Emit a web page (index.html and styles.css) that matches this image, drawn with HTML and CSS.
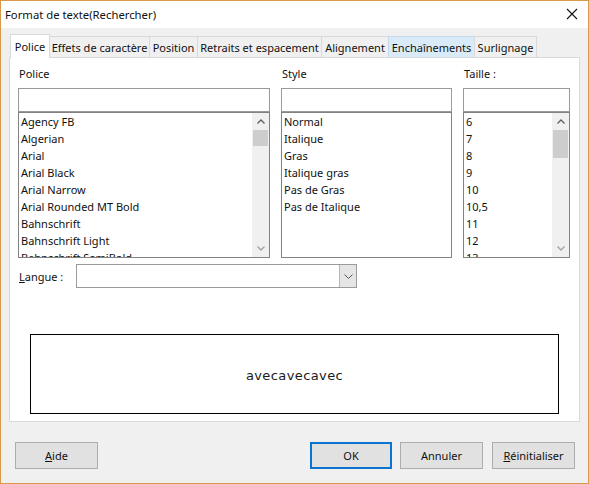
FILE: index.html
```html
<!DOCTYPE html>
<html lang="fr">
<head>
<meta charset="utf-8">
<title>Format de texte(Rechercher)</title>
<link rel="stylesheet" href="styles.css">
</head>
<body>
<div class="window">
  <div class="titlebar">
    <span class="title">Format de texte(Rechercher)</span>
    <svg class="close" width="12" height="12" viewBox="0 0 12 12"><path d="M1 1 L11 11 M11 1 L1 11" stroke="#111" stroke-width="1.1" fill="none"/></svg>
  </div>
  <div class="tabs">
    <div class="tab selected t-police">Police</div>
    <div class="tab t-effets">Effets de caractère</div>
    <div class="tab t-position">Position</div>
    <div class="tab t-retraits">Retraits et espacement</div>
    <div class="tab t-align">Alignement</div>
    <div class="tab hover t-ench">Enchaînements</div>
    <div class="tab t-surl">Surlignage</div>
  </div>
  <div class="panel">
    <div class="cols">
      <div class="col">
        <div class="label">Police</div>
        <div class="input"></div>
        <div class="list">
          <div class="items">
            <div class="item">Agency FB</div>
            <div class="item">Algerian</div>
            <div class="item">Arial</div>
            <div class="item">Arial Black</div>
            <div class="item">Arial Narrow</div>
            <div class="item">Arial Rounded MT Bold</div>
            <div class="item">Bahnschrift</div>
            <div class="item">Bahnschrift Light</div>
            <div class="item">Bahnschrift SemiBold</div>
          </div>
          <div class="scrollbar">
            <div class="sb-btn"><svg width="8" height="5" viewBox="0 0 8 5"><path d="M0.5 4.5 L4 1 L7.5 4.5" stroke="#606060" stroke-width="1.3" fill="none"/></svg></div>
            <div class="thumb thumb-small"></div>
            <div class="track"></div>
            <div class="sb-btn"><svg width="8" height="5" viewBox="0 0 8 5"><path d="M0.5 0.5 L4 4 L7.5 0.5" stroke="#a0a0a0" stroke-width="1.3" fill="none"/></svg></div>
          </div>
        </div>
      </div>
      <div class="col">
        <div class="label">Style</div>
        <div class="input"></div>
        <div class="list">
          <div class="items">
            <div class="item">Normal</div>
            <div class="item">Italique</div>
            <div class="item">Gras</div>
            <div class="item">Italique gras</div>
            <div class="item">Pas de Gras</div>
            <div class="item">Pas de Italique</div>
          </div>
        </div>
      </div>
      <div class="col">
        <div class="label">Taille :</div>
        <div class="input"></div>
        <div class="list">
          <div class="items">
            <div class="item">6</div>
            <div class="item">7</div>
            <div class="item">8</div>
            <div class="item">9</div>
            <div class="item">10</div>
            <div class="item">10,5</div>
            <div class="item">11</div>
            <div class="item">12</div>
            <div class="item">13</div>
          </div>
          <div class="scrollbar">
            <div class="sb-btn"><svg width="8" height="5" viewBox="0 0 8 5"><path d="M0.5 4.5 L4 1 L7.5 4.5" stroke="#606060" stroke-width="1.3" fill="none"/></svg></div>
            <div class="thumb thumb-large"></div>
            <div class="track"></div>
            <div class="sb-btn"><svg width="8" height="5" viewBox="0 0 8 5"><path d="M0.5 0.5 L4 4 L7.5 0.5" stroke="#a0a0a0" stroke-width="1.3" fill="none"/></svg></div>
          </div>
        </div>
      </div>
    </div>
    <div class="langue-row">
      <div class="langue-label"><u>L</u>angue :</div>
      <div class="combo">
        <div class="combo-field"></div>
        <div class="combo-btn"><svg width="9" height="5" viewBox="0 0 9 5"><path d="M0.5 0.5 L4.5 4.5 L8.5 0.5" stroke="#555" stroke-width="1" fill="none"/></svg></div>
      </div>
    </div>
    <div class="preview"><span>avecavecavec</span></div>
  </div>
  <div class="buttons">
    <div class="btn"><u>A</u>ide</div>
    <div class="spacer"></div>
    <div class="btn default">OK</div>
    <div class="btn">Annuler</div>
    <div class="btn"><u>R</u>éinitialiser</div>
  </div>
</div>
</body>
</html>
```
FILE: styles.css
```css
* { box-sizing: border-box; }
html, body { margin: 0; padding: 0; background: #f0f0f0; }
body {
  font-family: "Noto Sans", "Open Sans", sans-serif;
  font-size: 11px;
  color: #111;
}
.window {
  width: 589px;
  height: 484px;
  background: #f0f0f0;
  border: 1px solid #d8994a;
  display: flex;
  flex-direction: column;
}
.titlebar {
  height: 27px;
  background: #fff;
  display: flex;
  align-items: center;
  padding: 0 10px 1px 4px;
}
.title { flex: 1; font-size: 11.3px; }
.close { display: block; }

.tabs {
  margin-top: 6px;
  height: 23px;
  padding-left: 9px;
  display: flex;
  align-items: flex-end;
  position: relative;
  z-index: 2;
}
.tab {
  height: 21px;
  border: 1px solid #d9d9d9;
  border-bottom: none;
  background: #f0f0f0;
  margin-left: -1px;
  display: flex;
  align-items: center;
  justify-content: center;
  white-space: nowrap;
  padding-top: 1px;
}
.tab.selected {
  height: 24px;
  margin-bottom: -1px;
  background: #fff;
  margin-left: 0;
  padding-top: 0;
  position: relative;
  z-index: 3;
}
.tab.hover { background: #d9ebf9; border-color: #c6d9ec; }
.t-police { width: 40px; }
.t-effets { width: 101px; }
.t-position { width: 49px; }
.t-retraits { width: 125px; }
.t-align { width: 68px; }
.t-ench { width: 87px; }
.t-surl { width: 63px; }

.panel {
  margin: 0 8px;
  height: 365px;
  background: #fff;
  border: 1px solid #d9d9d9;
  padding: 0 9px 0 8px;
  display: flex;
  flex-direction: column;
  position: relative;
  z-index: 1;
}
.cols {
  display: grid;
  grid-template-columns: 252px 171px 107px;
  column-gap: 11px;
}
.col { display: flex; flex-direction: column; }
.label {
  height: 30px;
  line-height: 16px;
  padding-top: 8px;
  padding-left: 1px;
}
.input {
  height: 24px;
  border: 1px solid #9a9a9a;
  background: #fff;
}
.list {
  height: 146px;
  border: 1px solid #828282;
  background: #fff;
  display: flex;
  overflow: hidden;
}
.items { flex: 1; overflow: hidden; padding-left: 2px; }
.item { height: 17px; line-height: 17px; white-space: nowrap; }
.scrollbar {
  width: 17px;
  background: #f0f0f0;
  display: flex;
  flex-direction: column;
}
.sb-btn {
  height: 17px;
  display: flex;
  align-items: center;
  justify-content: center;
}
.thumb { background: #cdcdcd; margin: 0 1px; }
.thumb-small { height: 16px; }
.thumb-large { height: 28px; }
.track { flex: 1; }

.langue-row {
  margin-top: 6px;
  display: flex;
  align-items: center;
}
.langue-label { width: 58px; padding-left: 1px; }
.combo {
  width: 281px;
  height: 24px;
  border: 1px solid #9a9a9a;
  background: #fff;
  display: flex;
}
.combo-field { flex: 1; }
.combo-btn {
  width: 17px;
  background: #e5e5e5;
  border-left: 1px solid #b5b5b5;
  display: flex;
  align-items: center;
  justify-content: center;
}

.preview {
  margin: 46px 0 0 12px;
  width: 529px;
  height: 80px;
  border: 1px solid #000;
  display: flex;
  align-items: center;
  justify-content: center;
  font-family: "DejaVu Sans", sans-serif;
  font-size: 13px;
  letter-spacing: 0.4px;
  padding-top: 3px;
  color: #1a1a1a;
}

.buttons {
  margin-top: 20px;
  padding: 0 13px 0 14px;
  display: flex;
  gap: 9px;
}
.spacer { flex: 1; }
.btn {
  width: 83px;
  height: 27px;
  border: 1px solid #adadad;
  background: #e1e1e1;
  display: flex;
  align-items: center;
  justify-content: center;
}
.btn.default { width: 82px; margin-right: -1px; border: 2px solid #0a74d0; }
```
